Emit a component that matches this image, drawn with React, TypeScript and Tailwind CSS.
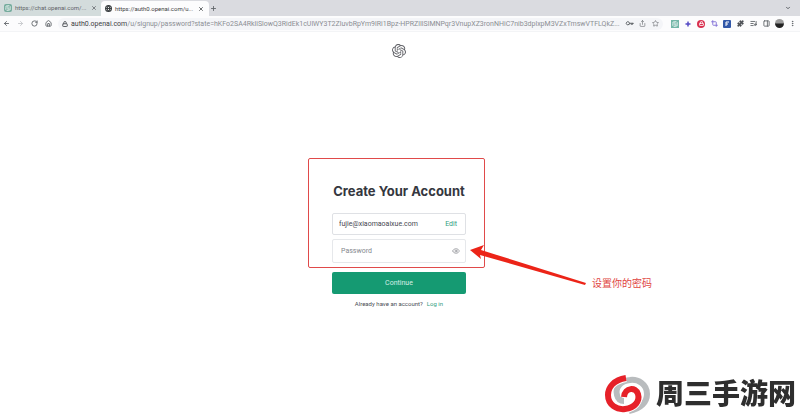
import type { ReactNode } from "react";
import { SiOpenai } from "react-icons/si";
import {
  ArrowLeft,
  ArrowRight,
  ChevronDown,
  Crop,
  Eye,
  Globe,
  House,
  Key,
  ListMusic,
  Lock,
  MoreVertical,
  PanelRight,
  Plus,
  Puzzle,
  RotateCw,
  Share,
  Sparkle,
  Star,
  X,
} from "lucide-react";

const ToolButton = ({ label, children }: { label: string; children: ReactNode }) => (
  <button type="button" aria-label={label} className="flex size-2 shrink-0 items-center justify-center">
    {children}
  </button>
);

const TabStrip = () => (
  <div className="flex h-4 items-end bg-[#dadbe0] text-[#5f6368]">
    <div className="flex h-4 w-[101px] items-center gap-[3px] bg-[#d3dcdc] pr-[3px] pl-1">
      <span className="flex size-2 shrink-0 items-center justify-center rounded-xs bg-[#75ac9d] text-white">
        <SiOpenai size={6} />
      </span>
      <span className="flex-1 text-[6px] leading-3 whitespace-nowrap">https://chat.openai.com/...</span>
      <ToolButton label="Close tab"><X size={6} strokeWidth={3} /></ToolButton>
    </div>
    <div className="flex h-[15px] w-[108px] items-center gap-[3px] rounded-t-sm bg-[#fcfcfd] px-1 text-[#3c4043]">
      <Globe size={7} strokeWidth={4} className="shrink-0" />
      <span className="flex-1 text-[6px] leading-3 whitespace-nowrap">https://auth0.openai.com/u...</span>
      <ToolButton label="Close tab"><X size={6} strokeWidth={3} /></ToolButton>
    </div>
    <div className="flex h-4 flex-1 items-center justify-between pr-2">
      <ToolButton label="New tab"><Plus size={7} strokeWidth={3} /></ToolButton>
      <ToolButton label="Search tabs"><ChevronDown size={6} strokeWidth={4} /></ToolButton>
    </div>
  </div>
);

const Toolbar = () => (
  <div className="flex h-4 items-center border-b border-[#f3f4f6] bg-[#fcfcfd] pr-1 pl-0.5 text-[#5f6368]">
    <div className="flex w-[56px] shrink-0 gap-[6px]">
      <ToolButton label="Back"><ArrowLeft size={7} strokeWidth={3} /></ToolButton>
      <span className="flex text-[#c4c6c9]">
        <ToolButton label="Forward"><ArrowRight size={7} strokeWidth={3} /></ToolButton>
      </span>
      <ToolButton label="Reload"><RotateCw size={7} strokeWidth={3} /></ToolButton>
      <ToolButton label="Home"><House size={7} strokeWidth={3} /></ToolButton>
    </div>
    <div className="flex h-3 min-w-0 flex-1 items-center rounded-full bg-[#f4f5f8] pr-1 pl-1">
      <Lock size={6} strokeWidth={4} className="shrink-0" />
      <p className="ml-[3px] min-w-0 flex-1 text-[7px] leading-3 whitespace-nowrap text-[#8b8e93]">
        <span className="text-[#3c4043]">auth0.openai.com</span>
        /u/signup/password?state=hKFo2SA4RkliSlowQ3RidEk1cUlWY3T2ZluvbRpYm9lRi1Bpz-HPRZlIlSlMNPqr3VnupXZ3ronNHiC7nib3dplxpM3VZxTmswVTFLQkZ...
      </p>
      <div className="ml-1 flex gap-[5px]">
        <ToolButton label="Passwords"><Key size={7} strokeWidth={3} className="rotate-45" /></ToolButton>
        <ToolButton label="Share"><Share size={7} strokeWidth={2} /></ToolButton>
        <ToolButton label="Bookmark"><Star size={7} strokeWidth={2} /></ToolButton>
      </div>
    </div>
    <div className="ml-2 flex shrink-0 items-center gap-[5px]">
      <ToolButton label="ChatGPT extension">
        <span className="flex size-2 items-center justify-center bg-[#74b7a8] text-white"><SiOpenai size={6} /></span>
      </ToolButton>
      <ToolButton label="Assistant"><Sparkle size={6} fill="#4a3fc0" stroke="#4a3fc0" /></ToolButton>
      <ToolButton label="Blocker">
        <span className="flex size-2 items-center justify-center rounded-full bg-[#d9304f] text-white">
          <Lock size={5} strokeWidth={4} />
        </span>
      </ToolButton>
      <ToolButton label="Capture"><Crop size={7} strokeWidth={3} color="#7e6bd6" /></ToolButton>
      <ToolButton label="Formatter">
        <svg width="8" height="8" viewBox="0 0 8 8" fill="none">
          <rect width="8" height="8" rx="1" fill="#3157a8" />
          <path d="M3 6 V2 H6 M3 4 H5" stroke="#ffffff" />
        </svg>
      </ToolButton>
      <ToolButton label="Extensions"><Puzzle size={7} fill="#4b4e53" /></ToolButton>
      <ToolButton label="Media"><ListMusic size={7} strokeWidth={3} /></ToolButton>
      <ToolButton label="Side panel"><PanelRight size={7} strokeWidth={3} /></ToolButton>
      <ToolButton label="Profile">
        <span className="size-[9px] shrink-0 rounded-full bg-linear-to-b from-[#9b9b9b] from-40% to-[#222222] to-60%" />
      </ToolButton>
      <ToolButton label="Menu"><MoreVertical size={7} strokeWidth={3} /></ToolButton>
    </div>
  </div>
);

// Red frame, arrow and caption laid over the form
const Annotations = () => (
  <>
    <div className="pointer-events-none absolute -top-[25px] -left-6 h-[110px] w-[177px] rounded-xs border border-[#e04a4a]" />
    <svg
      className="pointer-events-none absolute top-[62px] left-[138px]"
      width="118"
      height="42"
      viewBox="0 0 118 42"
      aria-hidden="true"
    >
      <path d="M0 5 L14 0 L11 5 L116 38 L115 40 L10 10 L11 14 Z" fill="#ec2418" />
    </svg>
    <p className="absolute top-[95px] left-[260px] text-[10px] leading-3 whitespace-nowrap text-[#e0453f]">
      设置你的密码
    </p>
  </>
);

const SignupForm = () => (
  <form className="relative w-[134px]" onSubmit={(e) => e.preventDefault()}>
    <h1 className="flex justify-center font-['Inter',sans-serif] text-[13px] leading-4 font-bold whitespace-nowrap text-[#353740]">
      Create Your Account
    </h1>
    <div className="mt-[14px] flex h-[22px] items-center rounded-xs border border-[#dfe1e5] px-[6px] text-[7px]">
      <input
        type="email"
        aria-label="Email address"
        readOnly
        defaultValue="fujie@xiaomaoaixue.com"
        className="min-w-0 flex-1 text-[#45474f] outline-none"
      />
      <a href="#edit" className="ml-2 pr-0.5 text-[#2f9e80]">Edit</a>
    </div>
    <div className="mt-1 flex h-6 items-center rounded-xs border border-[#e6e8eb] pr-[5px] pl-2 text-[7px]">
      <input
        type="password"
        aria-label="Password"
        placeholder="Password"
        className="min-w-0 flex-1 outline-none placeholder:text-[#85878d]"
      />
      <button type="button" aria-label="Show password" className="text-[#85878d]">
        <Eye size={8} strokeWidth={2} />
      </button>
    </div>
    <button type="submit" className="mt-[9px] h-[22px] w-full rounded-xs bg-[#159a72] text-[7px] text-[#d5efe6]">
      Continue
    </button>
    <p className="mt-[6px] flex justify-center gap-1 text-[6px] leading-2 whitespace-nowrap text-[#4b4d55]">
      Already have an account?
      <a href="#login" className="text-[#2f9e80]">Log in</a>
    </p>
    <Annotations />
  </form>
);

const Watermark = () => (
  <div className="fixed right-1 bottom-1 flex items-center gap-[5px]">
    <svg width="47" height="39" viewBox="0 0 47 39" fill="none" aria-hidden="true">
      <path
        d="M25 36 C37 34 43 27 43 19 C43 9 34 4 26 5 C16 6 11 13 13 20 C14 24 17 26 20 26"
        stroke="#b9bcbe"
        strokeWidth="6"
      />
      <path
        d="M22 3 C10 5 4 12 4 20 C4 30 13 35 21 34 C31 33 36 26 34 19 C32 12 21 12 20 22"
        stroke="#ffffff"
        strokeWidth="8"
      />
      <path
        d="M22 3 C10 5 4 12 4 20 C4 30 13 35 21 34 C31 33 36 26 34 19 C32 12 21 12 20 22"
        stroke="#e62129"
        strokeWidth="6"
      />
    </svg>
    <p className="text-[28px] leading-9 font-black text-[#2e2e2e]">周三手游网</p>
  </div>
);

const App = () => (
  <div className="min-h-screen bg-white font-['Roboto','Noto_Sans_CJK_SC',sans-serif]">
    <TabStrip />
    <Toolbar />
    <main className="flex flex-col items-center pr-0.5">
      <SiOpenai size={14} color="#5f6065" className="mt-3" />
      <div className="mt-[125px]">
        <SignupForm />
      </div>
    </main>
    <Watermark />
  </div>
);

export default App;
